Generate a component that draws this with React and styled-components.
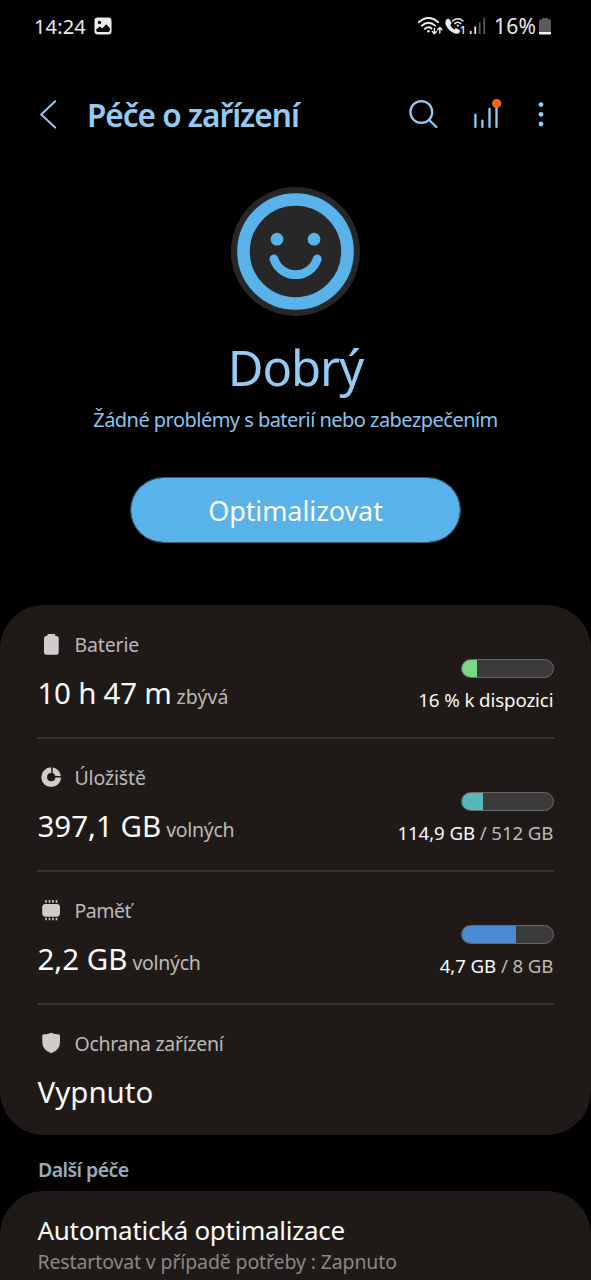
// Libraries
import React from "react";
import styled, { createGlobalStyle } from "styled-components";

const colours = {
  background: "#000000",
  card: "#1f1a18",
  divider: "#38332f",
  primary: "#5ab2ea",
  primaryLight: "#93cbf2",
  text: "#fafafa",
  textMuted: "#bcb9b8",
  icon: "#cfcdcc",
};

const GlobalStyle = createGlobalStyle`
  * {
    box-sizing: border-box;
  }

  body {
    margin: 0;
    background: ${colours.background};
    font-family: "Noto Sans", "Open Sans", sans-serif;
  }

  svg {
    display: block;
    flex-shrink: 0;
  }
`;

const Screen = styled.div`
  width: 591px;
  height: 1280px;
  overflow: hidden;
  display: flex;
  flex-direction: column;
  background: ${colours.background};
  white-space: nowrap;
`;

const StatusBar = styled.div`
  height: 51px;
  flex-shrink: 0;
  padding: 0 40px 0 34px;
  display: flex;
  justify-content: space-between;
  color: #ececec;
`;

const StatusGroup = styled.div`
  display: flex;
  align-items: center;
`;

const StatusText = styled.span`
  padding-top: 2px;
  font-size: ${(props) => props.$size};
  line-height: 49px;
  letter-spacing: 0.15px;
  margin: ${(props) => props.$margin};
`;

const Header = styled.header`
  height: 126px;
  flex-shrink: 0;
  padding: 0 40px 0 38px;
  display: flex;
  align-items: center;
`;

const Title = styled.h1`
  flex: 1;
  margin: 1px 0 0 27px;
  font-size: 31.5px;
  font-weight: 600;
  line-height: 44px;
  letter-spacing: -1px;
  color: ${colours.primaryLight};
`;

const Actions = styled.div`
  display: flex;
  gap: 31px;
`;

const Hero = styled.section`
  flex-shrink: 0;
  padding: 10px 0 62px;
  display: flex;
  flex-direction: column;
  align-items: center;
`;

const State = styled.h2`
  margin: 21px 0 0;
  font-size: 49px;
  font-weight: 400;
  line-height: 60px;
  letter-spacing: -1.1px;
  color: ${colours.primaryLight};
`;

const StateInfo = styled.p`
  margin: 9px 0 43px;
  font-size: 20px;
  line-height: 28px;
  letter-spacing: -0.53px;
  color: #8cc3ec;
`;

const Button = styled.button`
  width: 331px;
  height: 66px;
  padding: 2px 0 0;
  border: 1px solid #2b5874;
  border-radius: 33px;
  background: ${colours.primary};
  background-clip: padding-box;
  color: #fbfdff;
  font-family: inherit;
  font-size: 27px;
  line-height: 62px;
  letter-spacing: -0.09px;
`;

const Card = styled.section`
  flex-shrink: 0;
  padding: ${(props) => props.$padding};
  border-radius: ${(props) => props.$radius || "44px"};
  background: ${colours.card};
`;

const Row = styled.div`
  height: ${(props) => (props.$last ? "130px" : "133px")};
  padding-top: 26px;
  display: flex;
  justify-content: space-between;
  border-bottom: ${(props) => (props.$last ? "none" : `2px solid ${colours.divider}`)};
`;

const Label = styled.div`
  display: flex;
  align-items: center;
  gap: 9.5px;
  height: 26px;
  font-size: 19.5px;
  line-height: 26px;
  letter-spacing: ${(props) => props.$spacing};
  color: ${colours.textMuted};
`;

const Value = styled.div`
  margin-top: 15px;
  padding-left: 0.5px;
  display: flex;
  align-items: baseline;
  font-size: 29.5px;
  line-height: 40px;
  letter-spacing: ${(props) => props.$spacing || "0"};
  color: ${colours.text};
`;

const Suffix = styled.span`
  margin-left: 5px;
  font-size: 19.5px;
  letter-spacing: ${(props) => props.$spacing || "-0.3px"};
  color: ${colours.textMuted};
`;

const Usage = styled.div`
  padding-top: 27px;
  display: flex;
  flex-direction: column;
  align-items: flex-end;
`;

const Track = styled.div`
  width: 93px;
  height: 19px;
  border: 1px solid #6b6967;
  border-radius: 10px;
  overflow: hidden;
  background: #3b3b3b;
`;

const Fill = styled.div`
  height: 100%;
  background: ${(props) => props.$colour};
`;

const UsageText = styled.p`
  margin: 9px 0 0;
  padding-right: 0.6px;
  font-size: 18.7px;
  line-height: 26px;
  letter-spacing: -0.1px;
  color: ${colours.text};
`;

const Total = styled.span`
  color: ${colours.textMuted};
`;

const SectionTitle = styled.h3`
  flex-shrink: 0;
  margin: 0;
  padding: 14px 38px 0;
  font-size: 19.5px;
  font-weight: 600;
  line-height: 42px;
  letter-spacing: -0.55px;
  color: #9aabb9;
`;

const ItemTitle = styled.p`
  margin: 0;
  font-size: 26px;
  line-height: 34px;
  letter-spacing: -0.3px;
  color: ${colours.text};
`;

const ItemInfo = styled.p`
  margin: 1px 0 0;
  font-size: 19.5px;
  line-height: 28px;
  letter-spacing: -0.13px;
  color: #8b8786;
`;

const PictureIcon = () => (
  <svg width="18" height="18" viewBox="0 0 18 18">
    <rect x="0.5" y="0.5" width="17" height="17" rx="3.2" fill="#ececec" />
    <circle cx="5.5" cy="5.5" r="1.7" fill="#000" />
    <path d="M2.2 12.6 L5.8 9.4 L8.2 11.4 L12.2 7.2 L15.8 11 V13.6 Q15.8 15 14.2 15 H3.8 Q2.2 15 2.2 13.6 Z" fill="#000" />
  </svg>
);

const WifiIcon = () => (
  <svg width="27" height="51" viewBox="417 0 27 51" fill="none" stroke="#ececec" strokeWidth="1.9" strokeLinecap="round">
    <path d="M418.8 22.2 Q428.5 13.8 438.2 22.2" />
    <path d="M421.8 25.6 Q428.5 19.8 435.2 25.6" />
    <path d="M424.9 28.8 Q428.5 25.8 431.6 28.4" />
    <circle cx="428.4" cy="31.2" r="1.3" fill="#ececec" stroke="none" />
    <path d="M434.4 28.5 V33.4 M432.3 31.6 L434.4 33.7 L436.5 31.6 M439.8 33 V27.8 M437.7 29.8 L439.8 27.6 L441.9 29.8" strokeWidth="1.4" />
  </svg>
);

const CallIcon = () => (
  <svg width="24" height="51" viewBox="444 0 24 51" fill="none" stroke="#ececec" strokeLinecap="round">
    <path
      d="M446.2 20.2 Q447.8 18.4 449 19.2 L451.2 22.6 Q451.5 23.6 450 25 Q451.2 28.2 454.3 29.8 Q455.8 28.2 456.8 28.6 L459.6 30.6 Q460.3 31.8 458.4 33.2 Q455.4 34.6 450.4 30.8 Q444 25 446.2 20.2 Z"
      fill="#ececec"
      strokeWidth="0.6"
    />
    <path d="M452.6 21 Q457.8 16.6 463 21 M454.8 23.6 Q457.8 21 460.8 23.6" strokeWidth="1.5" />
    <circle cx="457.8" cy="25.6" r="1.1" fill="#ececec" stroke="none" />
    <text x="459.9" y="34" fill="#ececec" stroke="none" fontSize="10" fontWeight="600">
      1
    </text>
  </svg>
);

const SignalIcon = () => (
  <svg width="19" height="51" viewBox="468 0 19 51" strokeWidth="1.8">
    <path d="M470.7 31 V34 M475.2 26.6 V34" stroke="#ececec" />
    <path d="M479.7 22.2 V34 M484.2 18 V34" stroke="#565656" />
  </svg>
);

const StatusBatteryIcon = () => (
  <svg width="12" height="51" viewBox="539 0 12 51">
    <path d="M542 18 H548 V19.6 H549.6 Q551 19.6 551 21 V32 H539 V21 Q539 19.6 540.4 19.6 H542 Z" fill="#5a5a5a" />
    <path d="M539 32 H551 V33.2 Q551 34.6 549.6 34.6 H540.4 Q539 34.6 539 33.2 Z" fill="#f4f4f4" />
  </svg>
);

const BackIcon = () => (
  <svg width="22" height="32" viewBox="0 0 22 32" fill="none" stroke={colours.primaryLight} strokeWidth="2" strokeLinecap="round" strokeLinejoin="round">
    <path d="M17.2 3.2 L3.2 16.4 L17.2 29.6" />
  </svg>
);

const SearchIcon = () => (
  <svg width="32" height="32" viewBox="0 0 32 32" fill="none" stroke={colours.primaryLight} strokeWidth="2.3" strokeLinecap="round">
    <circle cx="14.3" cy="14" r="10.9" />
    <path d="M22.2 22 L29.4 29" />
  </svg>
);

const ReportIcon = () => (
  <svg width="32" height="32" viewBox="0 0 32 32" fill="none" stroke={colours.primaryLight} strokeWidth="2.3" strokeLinecap="round">
    <path d="M5.4 16.6 V29 M12.4 22.6 V29 M19.5 11 V29 M26.5 8 V29" />
    <circle cx="26.7" cy="5.5" r="4.6" fill="#f3641d" stroke="none" />
  </svg>
);

const MoreIcon = () => (
  <svg width="18" height="32" viewBox="0 0 18 32" fill={colours.primaryLight}>
    <circle cx="8" cy="6.6" r="2.4" />
    <circle cx="8" cy="16.3" r="2.4" />
    <circle cx="8" cy="26" r="2.4" />
  </svg>
);

const Face = () => (
  <svg width="129" height="129" viewBox="0 0 129 129" fill="none">
    <circle cx="64.5" cy="64.5" r="64.5" fill="#272727" />
    <circle cx="64.5" cy="64.5" r="52" stroke={colours.primary} strokeWidth="12.6" />
    <circle cx="46" cy="52.2" r="6.4" fill={colours.primary} />
    <circle cx="83" cy="52.2" r="6.4" fill={colours.primary} />
    <path d="M42.9 71.9 A22.8 22.8 0 0 0 86.3 71.9" stroke={colours.primary} strokeWidth="8.8" strokeLinecap="round" />
  </svg>
);

const BatteryIcon = () => (
  <svg width="28" height="26" viewBox="0 1 28 26" fill={colours.icon}>
    <rect x="10.3" y="2.9" width="8" height="4" rx="1" />
    <rect x="7" y="4.9" width="14.7" height="18.8" rx="2.2" />
  </svg>
);

const StorageIcon = () => (
  <svg width="28" height="26" viewBox="0 1 28 26" fill="none">
    <circle cx="14.2" cy="13.2" r="7" stroke={colours.icon} strokeWidth="5.8" />
    <path d="M15 9.8 V2.5 M18 12.8 H25" stroke={colours.card} strokeWidth="1.5" />
  </svg>
);

const MemoryIcon = () => (
  <svg width="28" height="26" viewBox="0 1 28 26" fill={colours.icon}>
    <rect x="5.2" y="6.9" width="17.8" height="12.8" rx="3.4" />
    <path d="M9 3 V5.8 M12.5 3 V5.8 M16 3 V5.8 M19.5 3 V5.8 M9 20.7 V23.3 M12.5 20.7 V23.3 M16 20.7 V23.3 M19.5 20.7 V23.3" stroke={colours.icon} strokeWidth="1.6" />
  </svg>
);

const ShieldIcon = () => (
  <svg width="28" height="26" viewBox="0 1 28 26" fill={colours.icon}>
    <path d="M14.2 2.7 Q18 4.4 22 4.6 Q23 4.7 23 5.8 V12 Q23 19.8 14.2 23.3 Q5.3 19.8 5.3 12 V5.8 Q5.3 4.7 6.3 4.6 Q10.4 4.4 14.2 2.7 Z" />
  </svg>
);

const items = [
  {
    icon: <BatteryIcon />,
    label: "Baterie",
    labelSpacing: "-0.15px",
    value: "10 h 47 m",
    valueSpacing: "-0.25px",
    suffix: "zbývá",
    suffixSpacing: "0.1px",
    percent: 16,
    colour: "#7bd887",
    used: "16 % k dispozici",
  },
  {
    icon: <StorageIcon />,
    label: "Úložiště",
    labelSpacing: "-0.15px",
    value: "397,1 GB",
    suffix: "volných",
    percent: 23,
    colour: "#53b9bf",
    used: "114,9 GB",
    total: " / 512 GB",
  },
  {
    icon: <MemoryIcon />,
    label: "Paměť",
    labelSpacing: "-0.5px",
    value: "2,2 GB",
    suffix: "volných",
    percent: 59,
    colour: "#4a8bd3",
    used: "4,7 GB",
    total: " / 8 GB",
  },
  {
    icon: <ShieldIcon />,
    label: "Ochrana zařízení",
    labelSpacing: "-0.3px",
    value: "Vypnuto",
  },
];

export default function App() {
  return (
    <Screen>
      <GlobalStyle />
      <StatusBar>
        <StatusGroup>
          <StatusText $size="20px" $margin="0 8px 0 0">
            14:24
          </StatusText>
          <PictureIcon />
        </StatusGroup>
        <StatusGroup>
          <WifiIcon />
          <CallIcon />
          <SignalIcon />
          <StatusText $size="21px" $margin="0 3px 0 7px">
            16%
          </StatusText>
          <StatusBatteryIcon />
        </StatusGroup>
      </StatusBar>

      <Header>
        <BackIcon />
        <Title>Péče o zařízení</Title>
        <Actions>
          <SearchIcon />
          <ReportIcon />
          <MoreIcon />
        </Actions>
      </Header>

      <Hero>
        <Face />
        <State>Dobrý</State>
        <StateInfo>Žádné problémy s baterií nebo zabezpečením</StateInfo>
        <Button>Optimalizovat</Button>
      </Hero>

      <Card $padding="1px 37px 0">
        {items.map((item, index) => (
          <Row key={item.label} $last={index === items.length - 1}>
            <div>
              <Label $spacing={item.labelSpacing}>
                {item.icon}
                {item.label}
              </Label>
              <Value $spacing={item.valueSpacing}>
                {item.value}
                {item.suffix && <Suffix $spacing={item.suffixSpacing}>{item.suffix}</Suffix>}
              </Value>
            </div>
            {item.used && (
              <Usage>
                <Track>
                  <Fill $colour={item.colour} style={{ width: `${item.percent}%` }} />
                </Track>
                <UsageText>
                  {item.used}
                  {item.total && <Total>{item.total}</Total>}
                </UsageText>
              </Usage>
            )}
          </Row>
        ))}
      </Card>

      <SectionTitle>Další péče</SectionTitle>

      <Card $padding="22px 37.5px 4px" $radius="44px 44px 0 0">
        <ItemTitle>Automatická optimalizace</ItemTitle>
        <ItemInfo>Restartovat v případě potřeby : Zapnuto</ItemInfo>
      </Card>
    </Screen>
  );
}
